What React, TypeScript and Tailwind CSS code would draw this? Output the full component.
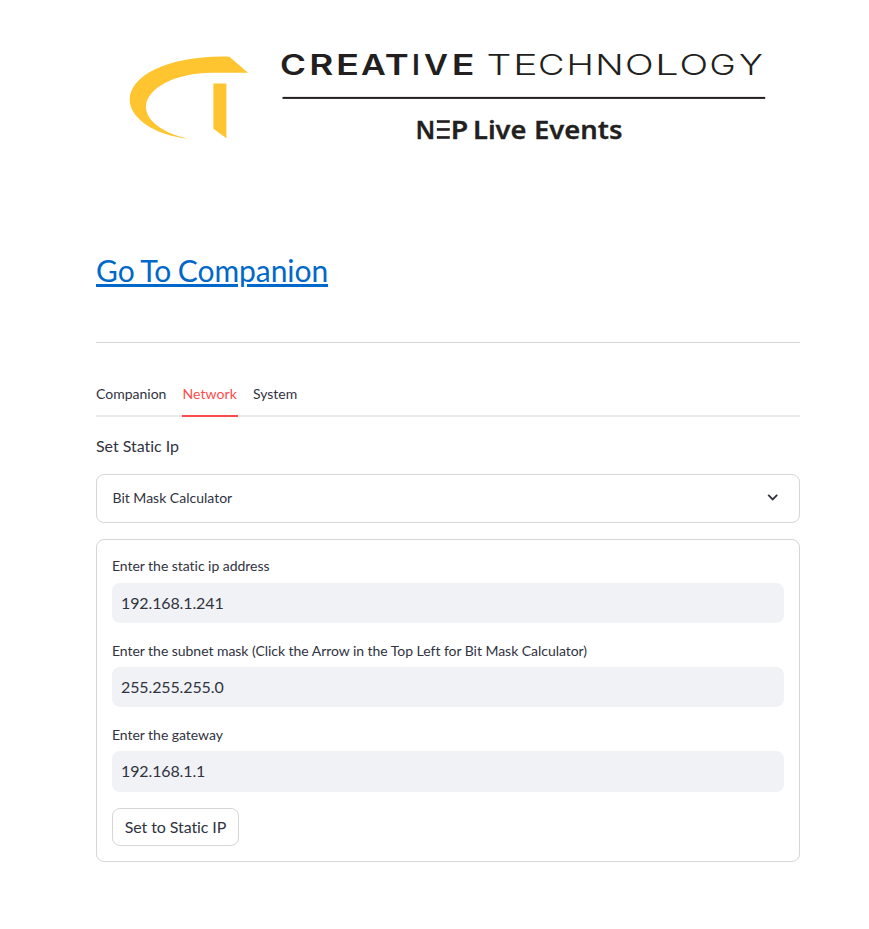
const tabs = ["Companion", "Network", "System"];

const fields = [
  { label: "Enter the static ip address", value: "192.168.1.241", leading: "leading-[21px]", height: "h-[40px]" },
  {
    label: "Enter the subnet mask (Click the Arrow in the Top Left for Bit Mask Calculator)",
    value: "255.255.255.0",
    leading: "leading-[23px]",
    height: "h-[40px]",
  },
  { label: "Enter the gateway", value: "192.168.1.1", leading: "leading-[23px]", height: "h-[41px]" },
];

// Each letter of the wordmark is centred on its own point and stretched to its own width.
type Glyph = [letter: string, center: number, stretch: number];

const creative: Glyph[] = [
  ["C", 292.9, 1.24], ["R", 321.2, 1.3], ["E", 347.4, 1.34], ["A", 373.4, 1.2],
  ["T", 396.7, 1.28], ["I", 415.9, 1], ["V", 436.1, 1.16], ["E", 463, 1.32],
];
const technology: Glyph[] = [
  ["T", 499, 1.38], ["E", 525.4, 1.46], ["C", 551.2, 1.28], ["H", 580.2, 1.3], ["N", 609.5, 1.32],
  ["O", 639.2, 1.33], ["L", 666.8, 1.48], ["O", 693.9, 1.33], ["G", 722.5, 1.24], ["Y", 750.9, 1.26],
];

function Letters({ glyphs }: { glyphs: Glyph[] }) {
  return (
    <>
      {glyphs.map(([letter, center, stretch], i) => (
        <text key={i} transform={`translate(${center} 75) scale(${stretch} 1)`} textAnchor="middle">
          {letter}
        </text>
      ))}
    </>
  );
}

function Logo() {
  return (
    <svg viewBox="96 40 704 110" className="block h-[110px] w-[704px]" fill="#231f20">
      <g fill="#ffc530">
        <path d="M229.4 56.7L248 72.7H212C176 72.7 146 88 146 107C146 120 162 133 188.3 138.7C155 135.5 129.7 118 129.7 100C129.7 75 170 55 229.4 56.7Z" />
        <path d="M213.4 83.4H226.4V138.3L213.4 128.7Z" />
      </g>
      <g fontSize="28.4" className="font-[Inter,sans-serif]">
        <g fontWeight="600">
          <Letters glyphs={creative} />
        </g>
        <g fontWeight="300">
          <Letters glyphs={technology} />
        </g>
      </g>
      <rect x="282.5" y="96.9" width="482.7" height="2" />
      <g fontSize="26" fontWeight="600" className="font-['Noto_Sans',sans-serif]" stroke="#231f20" strokeWidth="0.3">
        <text x="415.6" y="138.7" textLength="19.8" lengthAdjust="spacingAndGlyphs">N</text>
        <rect x="437" y="120.3" width="12.7" height="2.5" />
        <rect x="437" y="128.2" width="12.7" height="2.5" />
        <rect x="437" y="136.2" width="12.7" height="2.5" />
        <text x="450.7" y="138.7" textLength="17.5" lengthAdjust="spacingAndGlyphs">P</text>
        <text x="473" y="138.7" textLength="53.5" lengthAdjust="spacingAndGlyphs">Live</text>
        <text x="534" y="138.7" textLength="88.5" lengthAdjust="spacingAndGlyphs">Events</text>
      </g>
    </svg>
  );
}

export default function App() {
  return (
    <main className="flex h-[929px] w-[869px] flex-col overflow-hidden bg-white pt-10 pl-24 font-[Lato,sans-serif] text-base text-[#31333f] [font-variant-ligatures:none]">
      <div className="flex w-[704px] flex-col">
        <Logo />
        <a
          href="#"
          className="mt-[101px] self-start text-[30px] leading-[38px] tracking-[-0.07px] text-[#0068c9] underline decoration-[3px] underline-offset-[2px] [word-spacing:-1px]"
        >
          Go To Companion
        </a>
        <hr className="mt-[53px] border-t border-[#d6d6d8]" />
        <div className="mt-[31px] flex h-[43px] border-b-2 border-[#eaeaeb] text-sm leading-[38px]">
          {tabs.map((tab) => (
            <button
              key={tab}
              className={
                tab === "Network"
                  ? "mr-[14.5px] ml-4 h-[43px] w-[56px] border-b-2 border-[#ff4b4b] pb-[2px] text-left tracking-[0.1px] text-[#ff4b4b]"
                  : "h-[43px] border-b-2 border-transparent pb-[2px]"
              }
            >
              {tab}
            </button>
          ))}
        </div>
        <p className="mt-4 leading-[26px] tracking-[-0.04px]">Set Static Ip</p>
        <button className="mt-[15px] flex h-[49px] items-center justify-between rounded-lg border border-[#d6d6d8] pr-4 pb-[2px] pl-[15.5px] text-sm">
          <span>Bit Mask Calculator</span>
          <svg viewBox="0 0 20 20" className="h-5 w-5" fill="none" stroke="#31333f" strokeWidth="1.8">
            <path d="M5.2 6.9L9.7 11.4L14.2 6.9" />
          </svg>
        </button>
        <form className="mt-4 flex h-[323px] flex-col rounded-lg border border-[#d6d6d8] px-[15px] pt-[15px]">
          {fields.map((f) => (
            <label key={f.label} className="flex h-[84px] flex-col text-sm">
              <span className={`h-[28px] tracking-[-0.04px] ${f.leading}`}>{f.label}</span>
              <input
                readOnly
                value={f.value}
                className={`shrink-0 rounded-lg bg-[#f0f2f6] px-[9px] pb-[2px] text-base tracking-[-0.12px] outline-none ${f.height}`}
              />
            </label>
          ))}
          <button type="button" className="mt-px h-[38px] w-[127px] rounded-lg border border-[#d6d6d8] tracking-[-0.1px]">
            Set to Static IP
          </button>
        </form>
      </div>
    </main>
  );
}
